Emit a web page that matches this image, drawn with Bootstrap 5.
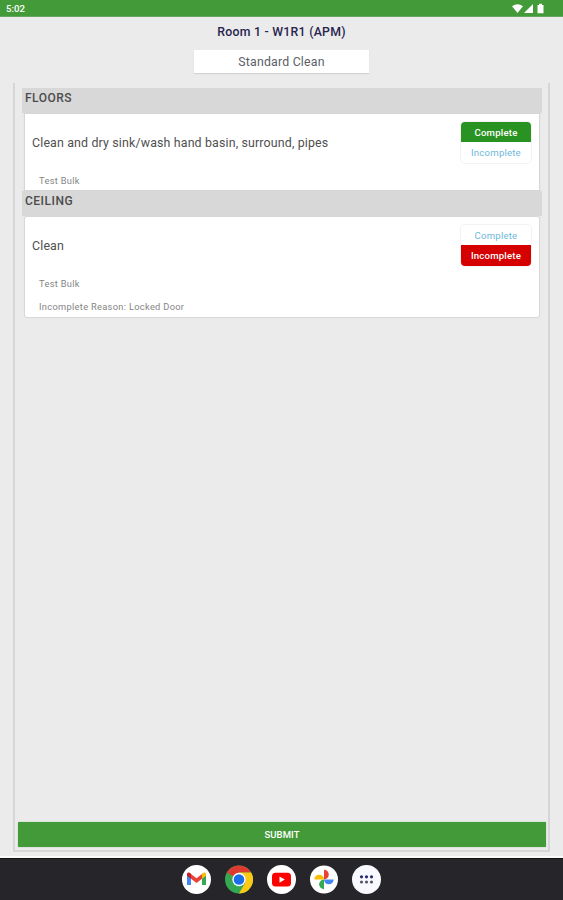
<!DOCTYPE html>
<html lang="en">
<head>
<meta charset="utf-8">
<meta name="viewport" content="width=device-width, initial-scale=1">
<title>Room 1 - W1R1 (APM)</title>
<link href="https://cdn.jsdelivr.net/npm/bootstrap@5.3.0/dist/css/bootstrap.min.css" rel="stylesheet">
<style>
body{font-family:Roboto,"Liberation Sans",sans-serif;background:#ebebeb;height:900px;overflow:hidden;line-height:1.2}
.statusbar{height:17px;background:#439a38;color:#fff;font-size:9.7px;padding:2px 17px 0 6px;font-weight:500;border-bottom:1px solid #68a762}
.room-title{height:33px;color:#28244f;font-size:12.3px;font-weight:500;letter-spacing:.26px;line-height:31px}
.clean-type{width:175px;height:23px;background:#fff;color:#5a5e66;font-size:12.3px;letter-spacing:.2px;line-height:24px;box-shadow:0 1px 1px #d3d3d3}
.panel{margin:10px 13px 0;height:769px;border:solid #d6d6d6;border-width:0 2px 2px;padding:5px 2px 3px}
.section-head{height:25px;margin:0 4px 0 5px;padding:0 3px;background:#d8d8d8;color:#4c4c4c;font-size:12px;font-weight:500;letter-spacing:.5px;line-height:21px;position:relative;z-index:1}
.task{margin:1px 7px 1px 8px;height:76px;background:#fff;border-radius:0;border:0;box-shadow:0 0 1px 1px #d6d6d6;padding:8px 8px 0 7px;color:#505050}
.task-last{height:100px;border-radius:2px}
.task-name{font-size:12.4px;letter-spacing:.15px;padding-top:13px;line-height:16px;white-space:nowrap}
.task-note{font-size:9.3px;letter-spacing:.3px;color:#858585;line-height:12px;padding-left:7px}
.task-top{height:53px}
.choice{width:70px;height:41px;border-radius:4px;overflow:hidden;box-shadow:0 0 0 1px #f3f3f3}
.choice .btn{height:20px;padding:0;font-size:9.6px;line-height:21px;border:0;border-radius:0;color:#6db8dc;letter-spacing:.2px}
.choice .btn:last-child{height:21px;line-height:22px}
.choice .done{background:#289222;color:#fff;font-weight:500}
.choice .missed{background:#d50000;color:#fff;font-weight:500}
.submit{height:25px;margin:0 0 0 1px;border-radius:1px;border:0;padding:0;background:#439a38;color:#fff;font-size:9.5px;font-weight:500;line-height:25px;letter-spacing:.1px;box-shadow:0 0 1px 0 #5f9f57}
.dock{margin-top:6px;height:42px;background:#26252a;border-top:1px solid #111;gap:13.8px;box-shadow:0 -2px #fafafa}
.dock svg{display:block}
</style>
<script src="https://cdn.jsdelivr.net/npm/bootstrap@5.3.0/dist/js/bootstrap.bundle.min.js"></script>
</head>
<body class="d-flex flex-column">
<header class="statusbar d-flex align-items-center justify-content-between flex-shrink-0">
  <span>5:02</span>
  <svg width="34" height="12" viewBox="0 0 34 12" fill="#fff"><path d="M0 3.200Q5.500-.5 11 3.200L5.500 10Z"/><path d="M21 1V10H12Z"/><path d="M25.500 2H27V.800h3V2h1.500v8.300h-6Z"/></svg>
</header>
<h1 class="room-title text-center m-0 flex-shrink-0">Room 1 - W1R1 (APM)</h1>
<div class="clean-type text-center mx-auto flex-shrink-0">Standard Clean</div>
<main class="panel d-flex flex-column flex-shrink-0">
  <h2 class="section-head">FLOORS</h2>
  <section class="task card">
    <div class="task-top d-flex justify-content-between">
      <div class="task-name">Clean and dry sink/wash hand basin, surround, pipes</div>
      <div class="choice d-flex flex-column flex-shrink-0"><button class="btn done">Complete</button><button class="btn">Incomplete</button></div>
    </div>
    <div class="task-note">Test Bulk</div>
  </section>
  <h2 class="section-head">CEILING</h2>
  <section class="task task-last card">
    <div class="task-top d-flex justify-content-between">
      <div class="task-name">Clean</div>
      <div class="choice d-flex flex-column flex-shrink-0"><button class="btn">Complete</button><button class="btn missed">Incomplete</button></div>
    </div>
    <div class="task-note">Test Bulk</div>
    <div class="task-note mt-auto pb-1">Incomplete Reason: Locked Door</div>
  </section>
  <button class="submit btn mt-auto">SUBMIT</button>
</main>
<nav class="dock d-flex justify-content-center align-items-center flex-shrink-0">
  <svg width="29" height="29" viewBox="0 0 29 29"><circle cx="14.500" cy="14.500" r="14.500" fill="#fff"/><path d="M5 9v11h4V12Z" fill="#4285f4"/><path d="M20 12v8h4V9Z" fill="#34a853"/><path d="M9 9l5.500 4.300L20 9v4.800l-5.500 4.300L9 13.800Z" fill="#ea4335"/><path d="M5 10.800V9.500C5 7.500 7 7 8.500 8.300L9 8.700v5.100Z" fill="#c5221f"/><path d="M24 10.800V9.500C24 7.500 22 7 20.500 8.300L20 8.700v5.100Z" fill="#fbbc04"/></svg>
  <svg width="28" height="29" viewBox="0 0 29 29"><circle cx="14.500" cy="14.500" r="14.500" fill="#34a853"/><path d="M14.500 14.500L1.940 7.250A14.500 14.500 0 0 1 27.060 7.250H14.500Z" fill="#dd3b30"/><path d="M14.500 7.250H27.060A14.500 14.500 0 0 1 14.500 29L20.780 18.120Z" fill="#fbc916"/><path d="M1.940 7.250L8.220 18.120A7.250 7.250 0 0 1 14.500 7.250Z" fill="#dd3b30"/><path d="M1.940 7.250L8.220 18.120L14.500 14.500Z" fill="#34a853"/><circle cx="14.500" cy="14.500" r="6.900" fill="#fff"/><circle cx="14.500" cy="14.500" r="5.500" fill="#1a6fe8"/></svg>
  <svg width="29" height="29" viewBox="0 0 29 29"><circle cx="14.500" cy="14.500" r="14.500" fill="#fff"/><rect x="5" y="7.800" width="19" height="13.800" rx="3.500" fill="#f00"/><path d="M12.500 11.500v6.200l5.300-3.100Z" fill="#fff"/></svg>
  <svg width="28" height="29" viewBox="0 0 29 29"><circle cx="14.500" cy="14.500" r="14.500" fill="#fff"/><path d="M14.500 4.500a5 5 0 0 1 0 10Z" fill="#ea4335"/><path d="M24.500 14.500a5 5 0 0 1-10 0Z" fill="#4285f4"/><path d="M14.500 24.500a5 5 0 0 1 0-10Z" fill="#34a853"/><path d="M4.500 14.500a5 5 0 0 1 10 0Z" fill="#fbbc04"/></svg>
  <svg width="29" height="29" viewBox="0 0 29 29"><circle cx="14.500" cy="14.500" r="14.500" fill="#f8f8ff"/><g fill="#262a70"><circle cx="9.500" cy="11.800" r="1.600"/><circle cx="14.500" cy="11.800" r="1.600"/><circle cx="19.500" cy="11.800" r="1.600"/></g><g fill="#555866"><circle cx="9.500" cy="17" r="1.600"/><circle cx="14.500" cy="17" r="1.600"/><circle cx="19.500" cy="17" r="1.600"/></g></svg>
</nav>
</body>
</html>
